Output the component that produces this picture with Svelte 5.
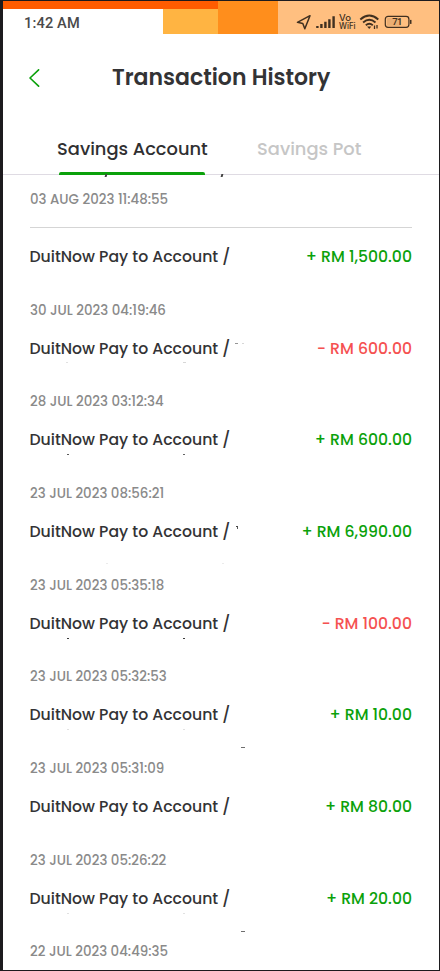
<script>
  const tabs = [
    { id: 'account', label: 'Savings Account' },
    { id: 'pot', label: 'Savings Pot' }
  ];

  let active = $state('account');

  // marks: leftovers of the hidden payee lines, as x, y, width, height and grey level
  const transactions = [
    { amount: 1500, date: '30 JUL 2023 04:19:46', marks: [] },
    { amount: -600, date: '28 JUL 2023 03:12:34', marks: [[205, 6, 3, 1, 150], [212, 6, 2, 1, 215], [36, 25, 2, 1, 225], [153, 25, 3, 1, 215]] },
    { amount: 600, date: '23 JUL 2023 08:56:21', marks: [[37, 26, 2, 1, 90], [153, 26, 2, 1, 100]] },
    { amount: 6990, date: '23 JUL 2023 05:35:18', marks: [[206, 6, 2, 1, 70], [207, 7, 1, 2, 90], [76, 43, 2, 1, 235], [192, 43, 2, 1, 235]] },
    { amount: -100, date: '23 JUL 2023 05:32:53', marks: [[37, 26, 2, 1, 60], [153, 26, 2, 1, 60]] },
    { amount: 10, date: '23 JUL 2023 05:31:09', marks: [[37, 26, 2, 1, 225], [153, 26, 2, 1, 225], [211, 44, 4, 1, 110]] },
    { amount: 80, date: '23 JUL 2023 05:26:22', marks: [] },
    { amount: 20, date: '22 JUL 2023 04:49:35', marks: [[37, 26, 2, 1, 225], [153, 26, 2, 1, 225], [211, 44, 4, 1, 110]] }
  ];

  const format = (n) =>
    `${n < 0 ? '-' : '+'} RM ${Math.abs(n).toLocaleString('en-US', { minimumFractionDigits: 2 })}`;
</script>

<div class="phone">
  <div class="status">
    <div class="clock"><span>1:42 AM</span></div>
    <div class="amber"></div>
    <div class="orange"></div>
    <div class="icons">
      <svg width="124" height="24" viewBox="0 0 124 24" fill="none" stroke="#403020">
        <path d="M4.4 13.3 17 6.7 11.8 19.8 9.8 14.6Z" stroke-width="1.5" stroke-linejoin="round" />
        <path d="M24.4 17v2M28.4 15v4M32.4 12.8V19M36.4 10.3V19M40.6 7.2V19" stroke-width="2.4" />
        <text x="46" y="12" textLength="12" lengthAdjust="spacingAndGlyphs">Vo</text>
        <text x="46" y="20.4" textLength="16.6" lengthAdjust="spacingAndGlyphs">WiFi</text>
        <path d="M67.3 10.4q9-7.6 18 0M70.1 13.4q6.2-5.2 12.4 0M72.8 16.2q3.5-2.8 7 0" stroke-width="1.9" />
        <path d="M74.1 17.4h4.2l-2.1 2.7z" fill="#403020" stroke="none" />
        <path d="M81.5 16.5v3.5M84 16v3.5" stroke-width="1.3" />
        <rect x="92.3" y="7.4" width="23.6" height="11" rx="2.8" stroke-width="1.2" />
        <rect x="94" y="9" width="14" height="7.8" rx="1" fill="#eaae73" stroke="none" />
        <path d="M117.7 10.9v4" stroke-width="1.6" />
        <text x="99.2" y="16.3" class="level">71</text>
      </svg>
    </div>
  </div>

  <header>
    <button class="back" aria-label="Back">
      <svg width="12" height="18" viewBox="0 0 12 18">
        <path d="M10.6 .8 2 9l8.6 8.2" fill="none" stroke="#0ba10b" stroke-width="1.6" stroke-linecap="round" stroke-linejoin="round" />
      </svg>
    </button>
    <h1>Transaction History</h1>
  </header>

  <nav>
    {#each tabs as tab}
      <button class="tab {tab.id}" class:active={active === tab.id} onclick={() => (active = tab.id)}>
        {tab.label}
      </button>
    {/each}
    <i class="cut one"></i>
    <i class="cut two"></i>
  </nav>

  <main>
    <div class="date first">03 AUG 2023 11:48:55</div>
    {#each transactions as t}
      <article>
        <div class="row">
          <span class="name">DuitNow Pay to Account /</span>
          <span class="amount" class:debit={t.amount < 0}>{format(t.amount)}</span>
        </div>
        <div class="date">{t.date}</div>
        {#each t.marks as [x, y, w, h, g]}
          <i style="left:{x}px;top:{y}px;width:{w}px;height:{h}px;background:rgb({g},{g},{g})"></i>
        {/each}
      </article>
    {/each}
  </main>
</div>

<style>
  :global(body) { background: #1d1b1e; }

  .phone {
    box-sizing: border-box; height: 971px; overflow: hidden;
    border: solid #1d1b1e; border-width: 1px 1px 1px 3px;
    background: #fff; color: #333335;
    font-family: Poppins, Inter, "Noto Sans", sans-serif; font-weight: 500;
  }
  button { border: 0; padding: 0; background: none; font: inherit; color: inherit; }

  .status { display: grid; grid-template: 32.5px / 160px 55px 60px 1fr; }
  .clock, .amber { border-top: 8px solid #ff5c00; }
  .clock span {
    display: block; padding-left: 21px; color: #4a4a4a;
    font: 500 14.6px/28px Roboto, sans-serif; letter-spacing: .15px;
  }
  .amber { background: #ffb442; }
  .orange { background: #ff8e1c; }
  .icons { background: #ffbf80; padding-left: 15px; }
  .icons svg { display: block; margin-top: 8px; }
  .icons text { font: 500 8.5px Inter, sans-serif; fill: #403020; stroke: none; }
  .icons .level { font: 500 9.5px Roboto, sans-serif; letter-spacing: -.5px; }

  header { display: flex; align-items: center; height: 89.5px; padding-left: 25px; }
  .back { display: flex; width: 84px; }
  h1 { margin: 0; font-size: 22px; font-weight: 600; line-height: 32px; white-space: nowrap; }

  nav {
    position: relative; display: flex; height: 52px; padding-left: 54px;
    box-sizing: border-box; border-bottom: 1px solid #dfdbe3;
  }
  .tab {
    position: relative; display: block; height: 51px; line-height: 51px; text-align: left;
    font-size: 17.85px; color: #c6c6c6; white-space: nowrap;
  }
  .account { width: 200px; }
  .active { color: #2f2f31; }
  .active::after {
    content: ""; position: absolute; left: 2px; bottom: -1px; width: 146px; height: 3px;
    border-radius: 2px 2px 0 0; background: #0ba10b;
  }
  .cut { position: absolute; bottom: -3px; width: 2px; height: 3px; background: #444; transform: skewX(-15deg); }
  .one { left: 102px; }
  .two { left: 218px; }

  main { padding: 0 27px; }
  .date { font-size: 13.4px; line-height: 20px; color: #8a8a8a; white-space: nowrap; }
  .first { padding: 15px 0 17px; border-bottom: 1px solid #d5d5d5; margin-bottom: 17.2px; }
  article { position: relative; height: 91.64px; }
  .row { display: flex; justify-content: space-between; line-height: 24px; margin-bottom: 31.6px; font-size: 15.7px; white-space: nowrap; }
  .name { margin-left: -.5px; }
  .amount { color: #0ba10b; }
  .amount.debit { color: #f55151; }
  article i { position: absolute; }
</style>
